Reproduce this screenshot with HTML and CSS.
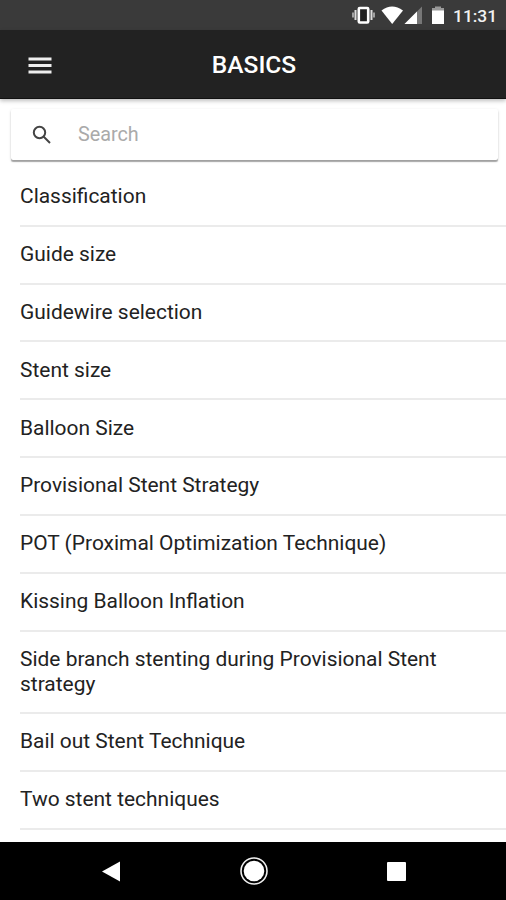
FILE: index.html
```html
<!DOCTYPE html>
<html lang="en">
<head>
<meta charset="utf-8">
<title>Basics</title>
<link rel="stylesheet" href="styles.css">
</head>
<body>
<div class="status">
  <svg class="status-icons" width="86" height="30" viewBox="0 0 86 30">
    <rect x="7.800" y="8" width="9.400" height="14.500" rx="1" fill="#222" stroke="#fff" stroke-width="2.600"/>
    <path d="M4.500 10v10M20.500 10v10" stroke="#ddd" stroke-width="2"/><path d="M2 12.500v5M23 12.500v5" stroke="#bbb" stroke-width="1.600"/>
    <path d="M30.500 10.500Q41 2.500 52 10.500L41.200 24Z" fill="#fff"/>
    <path d="M71 6.500V24H53.500Z" fill="#777"/><path d="M66 11.500V24H53.500Z" fill="#fff"/>
  </svg>
  <svg width="12" height="30" viewBox="0 0 12 30"><path d="M0 8h3V6.500h6V8h3v3H0Z" fill="#999"/><path d="M0 10.500h12V24H0Z" fill="#fff"/></svg>
  <span class="clock">11:31</span>
</div>
<header class="bar">
  <svg class="menu" width="24" height="20" viewBox="0 0 24 20"><path d="M.5 4h23M.5 10.500h23M.5 17h23" stroke="#eee" stroke-width="3"/></svg>
  <h1>BASICS</h1>
</header>
<main>
  <label class="search">
    <svg width="20" height="20" viewBox="0 0 20 20" fill="none" stroke="#444" stroke-width="2"><circle cx="7.500" cy="7.500" r="5.700"/><path d="M11.500 11.500l6.500 6.500"/></svg>
    <span>Search</span>
  </label>
  <ul>
    <li>Classification</li><li>Guide size</li><li>Guidewire selection</li><li>Stent size</li><li>Balloon Size</li><li>Provisional Stent Strategy</li><li>POT (Proximal Optimization Technique)</li><li>Kissing Balloon Inflation</li><li>Side branch stenting during Provisional Stent strategy</li><li>Bail out Stent Technique</li><li>Two stent techniques</li>
  </ul>
</main>
<nav>
  <svg width="18" height="21" viewBox="0 0 18 21"><path d="M18 .5V20.500L0 10.500Z" fill="#fff"/></svg>
  <svg width="28" height="28" viewBox="0 0 28 28"><circle cx="14" cy="14" r="13" fill="none" stroke="#eee" stroke-width="1.600"/><circle cx="14" cy="14" r="10.300" fill="#fff"/></svg>
  <svg width="19" height="19" viewBox="0 0 19 19"><rect width="19" height="19" rx="1" fill="#fff"/></svg>
</nav>
</body>
</html>
```
FILE: styles.css
```css
* { box-sizing: border-box; }
body { margin: 0; height: 900px; display: flex; flex-direction: column; overflow: hidden; background: #fff; color: #222; font-family: Roboto, sans-serif; }
.status { flex: none; height: 30px; background: #3a3a3a; color: #f2f2f2; display: flex; align-items: center; padding-left: 351px; }
.status-icons { margin-right: -5px; }
.clock { font-size: 17.400px; font-weight: 500; margin-left: 9px; line-height: 30px; padding-top: 1px; }
.bar { flex: none; height: 69px; background: #222; color: #fff; display: grid; grid-template-columns: 28px 1fr 28px; align-items: center; padding: 0 26px 0 28px; border-bottom: 1px solid #111; box-shadow: 0 2px 4px rgba(0,0,0,.25); }
.menu { margin-top: 1px; }
.bar h1 { margin: 0; padding-top: 1px; text-align: center; font-size: 24.500px; font-weight: 500; }
main { flex: 1; min-height: 0; overflow: hidden; }
.search { display: flex; align-items: center; height: 51px; margin: 10px 8px 9px 11px; border-radius: 2px; padding-left: 21px; box-shadow: 0 2px 1px rgba(0,0,0,.3), 0 1px 3px rgba(0,0,0,.15); font-size: 19.800px; color: #aaa; }
.search span { margin-left: 26px; padding-bottom: 1px; }
ul { list-style: none; margin: 0; padding: 0 0 0 20px; }
li { font-size: 20.950px; line-height: 24.800px; padding: 15.200px 40px 15.850px 0; border-bottom: 2px solid #ebebeb; }
nav { flex: none; height: 58px; background: #000; display: flex; align-items: center; justify-content: space-between; padding: 0 100px 0 102px; }
```
